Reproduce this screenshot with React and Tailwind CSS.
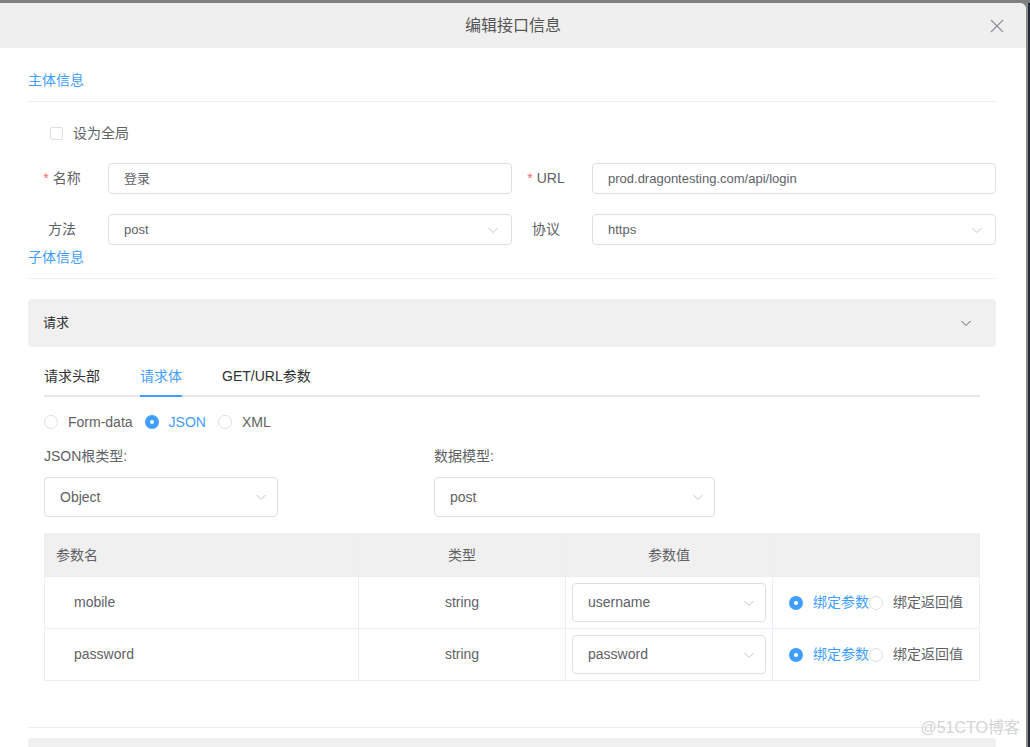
import React from "react";

const FONT = { fontFamily: '"Liberation Sans", "Noto Sans CJK SC", sans-serif' };

function Chevron({ className = "text-[#c0c4cc]" }) {
    return (
        <svg width="12" height="12" viewBox="0 0 12 12" className={className}>
            <path d="M1.5 4 L6 8.5 L10.5 4" fill="none" stroke="currentColor" strokeWidth="1" />
        </svg>
    );
}

function Radio({ checked, label }) {
    return (
        <label className="flex items-center">
            {checked ? (
                <span className="w-[14px] h-[14px] rounded-full bg-[#409eff] flex items-center justify-center">
                    <span className="w-[4px] h-[4px] rounded-full bg-white" />
                </span>
            ) : (
                <span className="w-[14px] h-[14px] rounded-full border border-[#dcdfe6] bg-white" />
            )}
            <span className={"ml-[10px] text-[14px] " + (checked ? "text-[#409eff]" : "text-[#606266]")}>{label}</span>
        </label>
    );
}

function FormRow({ label, required, value, select }) {
    return (
        <div className="flex items-center">
            <div className="w-[68px] text-center text-[14px] text-[#606266]">
                {required && <span className="text-[#f56c6c] mr-[4px]">*</span>}
                {label}
            </div>
            <div className="ml-[12px] w-[404px] h-[31px] border border-[#dcdfe6] rounded-[4px] flex items-center justify-between pl-[15px] pr-[12px] text-[13px] text-[#606266]">
                <span>{value}</span>
                {select && <Chevron />}
            </div>
        </div>
    );
}

const rows = [
    { name: "mobile", type: "string", value: "username" },
    { name: "password", type: "string", value: "password" },
];

export default function App() {
    return (
        <div className="w-[1030px] h-[747px] bg-[#808080] pt-[3px] flex overflow-hidden relative" style={FONT}>
            {/* 弹窗 */}
            <div className="w-[1026px] h-[744px] bg-white rounded-tr-[6px] overflow-hidden flex flex-col">
                <div className="h-[45px] shrink-0 bg-[#efefef] flex items-center justify-center relative">
                    <span className="text-[16px] text-[#555]">编辑接口信息</span>
                    <svg width="14" height="14" viewBox="0 0 14 14" className="absolute right-[22px] top-[16px] text-[#909399]">
                        <path d="M1 1 L13 13 M13 1 L1 13" stroke="currentColor" strokeWidth="1.3" />
                    </svg>
                </div>

                <div className="pl-[28px] pr-[30px]">
                    <div className="pt-[22px] h-[42px] text-[14px] leading-[20px] text-[#409eff]">主体信息</div>
                    <div className="mt-[11px] border-t border-[#ebeef5]" />

                    <div className="mt-[22px] h-[18px] flex items-center pl-[22px]">
                        <span className="w-[13px] h-[13px] border border-[#dcdfe6] rounded-[2px]" />
                        <span className="ml-[10px] text-[14px] text-[#606266]">设为全局</span>
                    </div>

                    <div className="mt-[21px] grid grid-cols-2">
                        <FormRow label="名称" required value="登录" />
                        <FormRow label="URL" required value="prod.dragontesting.com/api/login" />
                    </div>
                    <div className="mt-[20px] grid grid-cols-2">
                        <FormRow label="方法" value="post" select />
                        <FormRow label="协议" value="https" select />
                    </div>

                    <div className="h-[20px] leading-[20px] mt-[2px] text-[14px] text-[#409eff]">子体信息</div>
                    <div className="mt-[11px] border-t border-[#ebeef5]" />

                    {/* 请求 折叠面板 */}
                    <div className="mt-[20px] h-[48px] bg-[#f0f0f0] rounded-[4px] flex items-center justify-between pl-[15px] pr-[24px]">
                        <span className="text-[13px] text-[#303133]">请求</span>
                        <Chevron className="text-[#606266]" />
                    </div>

                    <div className="px-[16px]">
                        <div className="mt-[10px] h-[40px] flex border-b-2 border-[#e4e7ed]">
                            <div className="h-[40px] leading-[38px] text-[14px] text-[#303133]">请求头部</div>
                            <div className="ml-[40px] h-[40px] leading-[38px] text-[14px] text-[#409eff] border-b-2 border-[#409eff]">请求体</div>
                            <div className="ml-[40px] h-[40px] leading-[38px] text-[14px] text-[#303133]">GET/URL参数</div>
                        </div>

                        <div className="mt-[15px] h-[20px] flex items-center gap-[12px]">
                            <Radio label="Form-data" />
                            <Radio checked label="JSON" />
                            <Radio label="XML" />
                        </div>

                        <div className="mt-[14px] grid grid-cols-[390px_1fr]">
                            <div>
                                <div className="h-[20px] leading-[20px] text-[14px] text-[#606266]">JSON根类型:</div>
                                <div className="mt-[11px] w-[234px] h-[40px] border border-[#dcdfe6] rounded-[4px] flex items-center justify-between pl-[15px] pr-[10px] text-[14px] text-[#606266]">
                                    <span>Object</span>
                                    <Chevron />
                                </div>
                            </div>
                            <div>
                                <div className="h-[20px] leading-[20px] text-[14px] text-[#606266]">数据模型:</div>
                                <div className="mt-[11px] w-[281px] h-[40px] border border-[#dcdfe6] rounded-[4px] flex items-center justify-between pl-[15px] pr-[10px] text-[14px] text-[#606266]">
                                    <span>post</span>
                                    <Chevron />
                                </div>
                            </div>
                        </div>

                        <table className="mt-[16px] w-full border-collapse text-[14px] text-[#606266]">
                            <thead>
                                <tr className="h-[43px] bg-[#f0f0f0]">
                                    <th className="w-[314px] text-left font-normal pl-[11px] border border-[#ebeef5]">参数名</th>
                                    <th className="w-[207px] font-normal border border-[#ebeef5]">类型</th>
                                    <th className="w-[207px] font-normal border border-[#ebeef5]">参数值</th>
                                    <th className="font-normal border border-[#ebeef5]"></th>
                                </tr>
                            </thead>
                            <tbody>
                                {rows.map((r) => (
                                    <tr className="h-[52px]" key={r.name}>
                                        <td className="pl-[29px] border border-[#ebeef5]">{r.name}</td>
                                        <td className="text-center border border-[#ebeef5]">{r.type}</td>
                                        <td className="px-[6px] border border-[#ebeef5]">
                                            <div className="h-[39px] border border-[#dcdfe6] rounded-[4px] flex items-center justify-between pl-[15px] pr-[10px]">
                                                <span>{r.value}</span>
                                                <Chevron />
                                            </div>
                                        </td>
                                        <td className="pl-[16px] border border-[#ebeef5]">
                                            <div className="flex items-center">
                                                <Radio checked label="绑定参数" />
                                                <Radio label="绑定返回值" />
                                            </div>
                                        </td>
                                    </tr>
                                ))}
                            </tbody>
                        </table>
                    </div>

                    <div className="mt-[46px] border-t border-[#ebeef5]" />
                    <div className="mt-[10px] h-[48px] bg-[#f0f0f0] rounded-[4px]" />
                </div>
            </div>
            <div className="w-[2px] h-full bg-[#8a8a8a]" />
            <div className="w-[2px] h-full bg-[#1d2b3a]" />

            {/* 水印 */}
            <div className="absolute right-[10px] top-[716px] text-[16px] text-[#d4d4d4]">@51CTO博客</div>
        </div>
    );
}
